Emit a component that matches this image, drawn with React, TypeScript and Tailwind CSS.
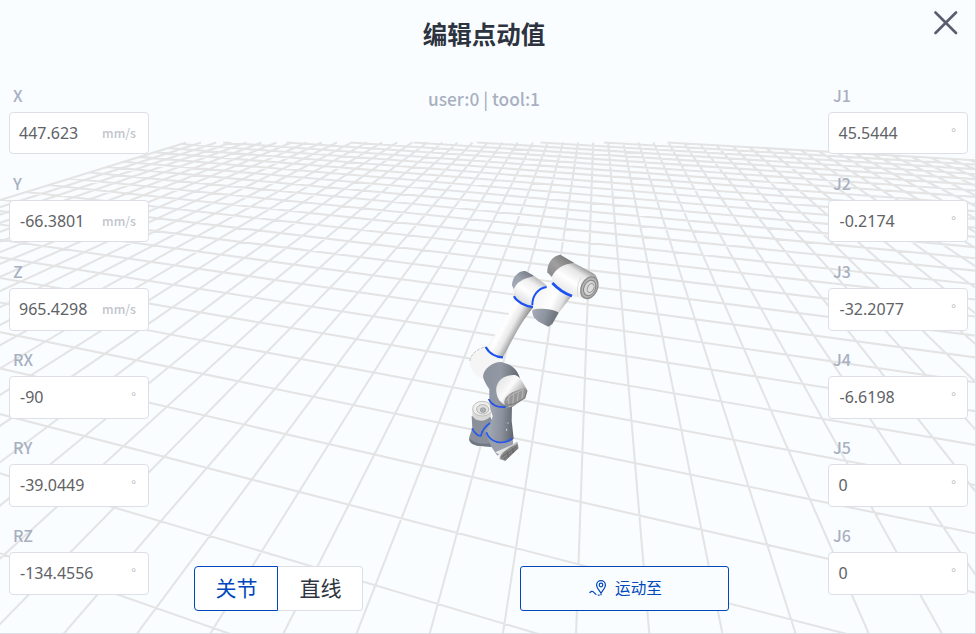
import React from "react";

const FAMILY = "font-['Noto_Sans_CJK_SC',sans-serif]";

type Field = { label: string; value: string; unit: string };

const pose: Field[] = [
  { label: "X", value: "447.623", unit: "mm/s" },
  { label: "Y", value: "-66.3801", unit: "mm/s" },
  { label: "Z", value: "965.4298", unit: "mm/s" },
  { label: "RX", value: "-90", unit: "°" },
  { label: "RY", value: "-39.0449", unit: "°" },
  { label: "RZ", value: "-134.4556", unit: "°" },
];

const joints: Field[] = [
  { label: "J1", value: "45.5444", unit: "°" },
  { label: "J2", value: "-0.2174", unit: "°" },
  { label: "J3", value: "-32.2077", unit: "°" },
  { label: "J4", value: "-6.6198", unit: "°" },
  { label: "J5", value: "0", unit: "°" },
  { label: "J6", value: "0", unit: "°" },
];

// Two-point perspective of the floor: horizon at y=15, vanishing points at x=597.6 and x=-1537.
const depth = (i: number, j: number) => 4.857 - 0.1183 * i - 0.498 * j;
function project(i: number, j: number): string {
  const h = 2134.6 / depth(i, j);
  return `${(597.6 - (0.508 - 0.1183 * i) * h).toFixed(2)} ${(15 + h).toFixed(2)}`;
}
const NEAR = 2.8;
const FAR = 16.75;
const I0 = -23, I1 = 27, J0 = -26, J1 = 24;

// Lines are cut where their centre passes the far plane, which leaves a ragged edge.
function gridPath(): string {
  const parts: string[] = [];
  for (let i = I0; i <= I1; i++) {
    const start = Math.max(J0, (4.857 - 0.1183 * i - FAR) / 0.498);
    const end = Math.min(J1, (4.857 - 0.1183 * i - NEAR) / 0.498);
    if (end > start) parts.push(`M${project(i, start)}L${project(i, end)}`);
  }
  for (let j = J0; j <= J1; j++) {
    const start = Math.max(I0, (4.857 - 0.498 * j - FAR) / 0.1183);
    const end = Math.min(I1, (4.857 - 0.498 * j - NEAR) / 0.1183);
    if (end > start) parts.push(`M${project(start, j)}L${project(end, j)}`);
  }
  return parts.join("");
}

function Robot() {
  return (
    <g>
      <defs>
        <linearGradient id="fore" gradientUnits="userSpaceOnUse" x1="175" y1="245" x2="236" y2="278">
          <stop offset="0" stopColor="#f2f2f2" /><stop offset=".3" stopColor="#ffffff" />
          <stop offset=".62" stopColor="#e9e9e9" /><stop offset="1" stopColor="#8f8f8f" />
        </linearGradient>
        <linearGradient id="tubeA" gradientUnits="userSpaceOnUse" x1="298" y1="108" x2="245" y2="190">
          <stop offset="0" stopColor="#a5a5a5" /><stop offset=".3" stopColor="#efefef" />
          <stop offset=".6" stopColor="#ffffff" /><stop offset="1" stopColor="#dcdcdc" />
        </linearGradient>
        <linearGradient id="tubeB" gradientUnits="userSpaceOnUse" x1="295" y1="165" x2="378" y2="205">
          <stop offset="0" stopColor="#f6f6f6" /><stop offset=".5" stopColor="#ffffff" />
          <stop offset=".8" stopColor="#e2e2e2" /><stop offset="1" stopColor="#a3a3a3" />
        </linearGradient>
        <linearGradient id="tubeC" gradientUnits="userSpaceOnUse" x1="425" y1="78" x2="372" y2="162">
          <stop offset="0" stopColor="#9a9a9a" /><stop offset=".22" stopColor="#e6e6e6" />
          <stop offset=".55" stopColor="#ffffff" /><stop offset="1" stopColor="#e4e4e4" />
        </linearGradient>
        <linearGradient id="capC" gradientUnits="userSpaceOnUse" x1="378" y1="50" x2="328" y2="105">
          <stop offset="0" stopColor="#7c7c7c" /><stop offset=".5" stopColor="#9f9f9f" /><stop offset="1" stopColor="#8a8a8a" />
        </linearGradient>
        <linearGradient id="capA" gradientUnits="userSpaceOnUse" x1="265" y1="92" x2="220" y2="145">
          <stop offset="0" stopColor="#747a84" /><stop offset=".5" stopColor="#9ca3ae" /><stop offset="1" stopColor="#a4abb5" />
        </linearGradient>
        <linearGradient id="capB" gradientUnits="userSpaceOnUse" x1="280" y1="215" x2="350" y2="240">
          <stop offset="0" stopColor="#a2a9b4" /><stop offset=".5" stopColor="#8d949f" /><stop offset="1" stopColor="#686d76" />
        </linearGradient>
        <linearGradient id="steel" gradientUnits="userSpaceOnUse" x1="150" y1="250" x2="222" y2="255">
          <stop offset="0" stopColor="#a0a6b1" /><stop offset=".5" stopColor="#8b919c" /><stop offset="1" stopColor="#5e636d" />
        </linearGradient>
        <linearGradient id="elbow" gradientUnits="userSpaceOnUse" x1="180" y1="125" x2="250" y2="178">
          <stop offset="0" stopColor="#e9e9e9" /><stop offset=".4" stopColor="#fbfbfb" />
          <stop offset=".7" stopColor="#c2c2c2" /><stop offset="1" stopColor="#8c8c8c" />
        </linearGradient>
        <linearGradient id="upper" gradientUnits="userSpaceOnUse" x1="130" y1="90" x2="235" y2="100">
          <stop offset="0" stopColor="#8d939e" /><stop offset=".5" stopColor="#9399a4" /><stop offset="1" stopColor="#656a73" />
        </linearGradient>
        <linearGradient id="foot" gradientUnits="userSpaceOnUse" x1="180" y1="320" x2="215" y2="350">
          <stop offset="0" stopColor="#f7f7f7" /><stop offset=".5" stopColor="#d5d5d5" /><stop offset="1" stopColor="#777777" />
        </linearGradient>
      </defs>

      {/* shoulder, elbow and base */}
      <g transform="translate(440 340) scale(.33333)">
        <path d="M89 62C91 40 113 23 140 21L190 51L178 72L150 82L131 120C105 106 88 84 89 62Z" fill="#f5f5f5" />
        <path d="M90 63C92 42 113 25 138 21" fill="none" stroke="#c9c5be" strokeWidth="3" strokeDasharray="9 4" />
        <path d="M95 229L150 228L158 246L160 320L112 317C93 311 86 303 88 290L97 265Z" fill="#89909b" />
        <path d="M88 294C99 309 126 314 157 310L157 321L112 317C94 313 86 306 88 294Z" fill="#727883" />
        <path d="M97 206V225C101 244 135 250 153 228L155 205Z" fill="#d9d9d8" />
        <ellipse cx="127" cy="206" rx="29" ry="22" fill="#efefed" stroke="#b9b7b4" strokeWidth="2.5" />
        <ellipse cx="128" cy="208" rx="18" ry="14" fill="#e1e1e0" stroke="#b4b4b3" strokeWidth="3" />
        <ellipse cx="129" cy="210" rx="8" ry="7" fill="#adb0b4" stroke="#8f9297" strokeWidth="2" />
        <path d="M134 272L152 249L160 290L218 297L220 312L172 347L154 320Z" fill="#989faa" />
        <path d="M147 176C162 203 190 204 216 200L215 242L221 296C201 316 158 310 139 278L152 249L158 228L151 207Z" fill="url(#steel)" />
        <path d="M129 109C132 82 162 65 184 66C214 73 232 88 239 112L228 192L197 203C174 203 156 196 148 178L148 148C139 135 130 121 129 109Z" fill="url(#upper)" />
        <path d="M170 139C178 111 207 103 226 105C242 111 252 132 261 150L254 174L217 201L193 194C174 185 165 158 170 139Z" fill="url(#elbow)" />
        <path d="M194 194C188 174 207 154 258 144L261 153L254 174L216 201Z" fill="#979797" />
        <path d="M200 183C208 165 230 155 252 149M206 193L207 164M218 196L221 159M232 186L235 153M246 176L249 149" fill="none" stroke="#b9b9b9" strokeWidth="3" />
        <path d="M197 191C205 199 220 196 254 174L261 151" fill="none" stroke="#808080" strokeWidth="4" />
        <path d="M146 177C153 194 172 204 197 201" fill="none" stroke="#2350e8" strokeWidth="5" />
        <path d="M96 265Q108 287 123 288M150 249Q127 265 122 289" fill="none" stroke="#2558ef" strokeWidth="5" />
        <path d="M139 277C150 309 190 317 217 295" fill="none" stroke="#2558ef" strokeWidth="5" />
        <path d="M166 337L220 313L232 304L235 325L196 362L177 357L179 345Z" fill="url(#foot)" />
        <path d="M181 357C176 341 217 315 234 313L235 325L196 362Z" fill="#858585" />
        <path d="M187 350L230 320M192 357L230 326M202 335L205 351M217 325L220 339" stroke="#666666" strokeWidth="3" />
        <path d="M200 266V273M204 247V251" stroke="#d5d7db" strokeWidth="3" />
      </g>

      {/* forearm, wrist and flange */}
      <g transform="translate(440 240) scale(.33333)">
        <path d="M222 171L280 202C261 226 246 247 226 283L188 353C167 354 147 342 138 321C176 267 210 237 222 171Z" fill="url(#fore)" />
        <path d="M216 136C216 111 235 92 256 93L280 106L280 119L232 142L221 148Z" fill="url(#capA)" />
        <path d="M221 148C231 125 251 115 283 108L320 136C318 151 292 191 278 202C255 200 230 189 222 171Z" fill="url(#tubeA)" />
        <path d="M319 142L342 130L395 168L354 221L278 210C276 181 286 155 319 142Z" fill="url(#tubeB)" />
        <path d="M277 210C292 203 340 206 356 218L337 252L325 260L303 249C284 239 275 225 277 210Z" fill="url(#capB)" />
        <path d="M322 97C320 72 337 47 361 44L402 68L395 79L336 112Z" fill="url(#capC)" />
        <path d="M335 111C347 85 372 71 402 69L457 98C474 107 479 126 464 151C456 167 441 180 426 174L395 168L339 130Z" fill="url(#tubeC)" />
        <path d="M423 113Q408 136 414 170" fill="none" stroke="#dddddd" strokeWidth="3" />
        <ellipse cx="448" cy="143" rx="24" ry="34" transform="rotate(25 448 143)" fill="#b3b3b3" stroke="#8b8b8b" strokeWidth="4" />
        <ellipse cx="449" cy="144" rx="17" ry="24" transform="rotate(25 449 144)" fill="#d6d6d6" stroke="#858585" strokeWidth="3" />
        <ellipse cx="452" cy="144" rx="9" ry="14" transform="rotate(25 452 144)" fill="#dedede" stroke="#9a9a9a" strokeWidth="3" />
        <path d="M222 169C230 185 256 199 279 201" fill="none" stroke="#1c52f0" strokeWidth="7" />
        <path d="M320 141C294 145 277 166 277 195" fill="none" stroke="#1c52f0" strokeWidth="6" />
        <path d="M337 129C352 145 375 161 396 168" fill="none" stroke="#1c52f0" strokeWidth="8" />
        <path d="M137 321C148 341 168 351 189 352" fill="none" stroke="#1c52f0" strokeWidth="7" />
      </g>
    </g>
  );
}

function Scene() {
  return (
    <svg className="absolute inset-0" width="976" height="634" viewBox="0 0 976 634">
      <path d={gridPath()} fill="none" stroke="#e4e4e4" strokeWidth="2.1" />
      <Robot />
    </svg>
  );
}

function FieldColumn({ fields, side }: { fields: Field[]; side: "left" | "right" }) {
  return (
    <div className="flex w-[140px] flex-col">
      {fields.map((f, n) => (
        <div key={f.label} className="flex h-[88px] flex-col">
          <label className={`${side === "left" ? "pl-1" : "pl-[5px]"} h-8 text-base leading-[30px] font-medium text-[#a8b0bf]`}>
            {f.label}
          </label>
          <div className={`flex items-center justify-between rounded border border-[#dcdfe6] bg-white ${side === "left" ? "pr-3 pl-[9px]" : "pr-[11px] pl-[9.5px]"} ${n < 2 ? "h-[42px]" : "h-[43px] pb-px"}`}>
            <span className={`font-['Noto_Sans',sans-serif] text-base text-[#606266] ${f.value.startsWith("-") ? "pl-px" : ""}`}>{f.value}</span>
            <span className="text-[12.3px] font-medium text-[#c0c4cc]">{f.unit}</span>
          </div>
        </div>
      ))}
    </div>
  );
}

function RouteIcon() {
  return (
    <svg width="18" height="18" viewBox="0 0 18 18" fill="none" stroke="#0047bb" strokeWidth="1.2">
      <path d="M12 14C9.5 10.8 7.6 8.5 7.6 6A4.4 4.4 0 0 1 16.4 6C16.4 8.5 14.5 10.8 12 14Z" />
      <circle cx="12" cy="6" r="1.8" />
      <path d="M.6 14Q2.8 11 4.6 13.2T7.4 15.6M8.8 16.2H10.6M12 16.2V14.5" />
    </svg>
  );
}

export default function App() {
  return (
    <main className={`${FAMILY} relative h-[634px] w-[976px] overflow-hidden border-r border-b border-[#dcdfe6] bg-[#fafdff]`}>
      <Scene />
      <div className="relative flex h-full flex-col">
        <header className="flex h-20 shrink-0 justify-center pt-4">
          <h1 className="pr-[7px] text-[24.5px] leading-9 font-bold text-[#2d3440]">编辑点动值</h1>
          <button className="absolute top-[11px] right-[17px]" aria-label="关闭">
            <svg width="24" height="24" viewBox="0 0 24 24" stroke="#595d6e" strokeWidth="2.6" strokeLinecap="round">
              <path d="M1.5 1.5L22 22M22 1.5L1.5 22" />
            </svg>
          </button>
        </header>
        <div className="flex flex-1 justify-between pr-[7px] pl-[9px]">
          <FieldColumn fields={pose} side="left" />
          <section className="flex flex-1 flex-col">
            <p className="pt-[5px] pr-[9px] text-center text-[17.3px] leading-[27px] font-medium text-[#a8b0bf]">user:0 | tool:1</p>
            <div className="mt-auto mb-[22px] flex pl-[45px]">
              <div className="flex h-[45px] text-[21px]">
                <button className="w-[84px] rounded-l border border-[#0047bb] bg-white pb-0.5 pl-px text-[#0047bb]">关节</button>
                <button className="w-[85px] rounded-r border border-l-0 border-[#dcdfe6] bg-white pb-0.5 pl-px text-[#2d3440]">直线</button>
              </div>
              <button className="ml-[157px] flex h-[45px] w-[209px] items-center justify-center gap-2 rounded-[3px] border border-[#0047bb] bg-[#fafdff] pb-0.5 pl-0.5 text-[15.6px] text-[#0047bb]">
                <RouteIcon />
                运动至
              </button>
            </div>
          </section>
          <FieldColumn fields={joints} side="right" />
        </div>
      </div>
    </main>
  );
}
